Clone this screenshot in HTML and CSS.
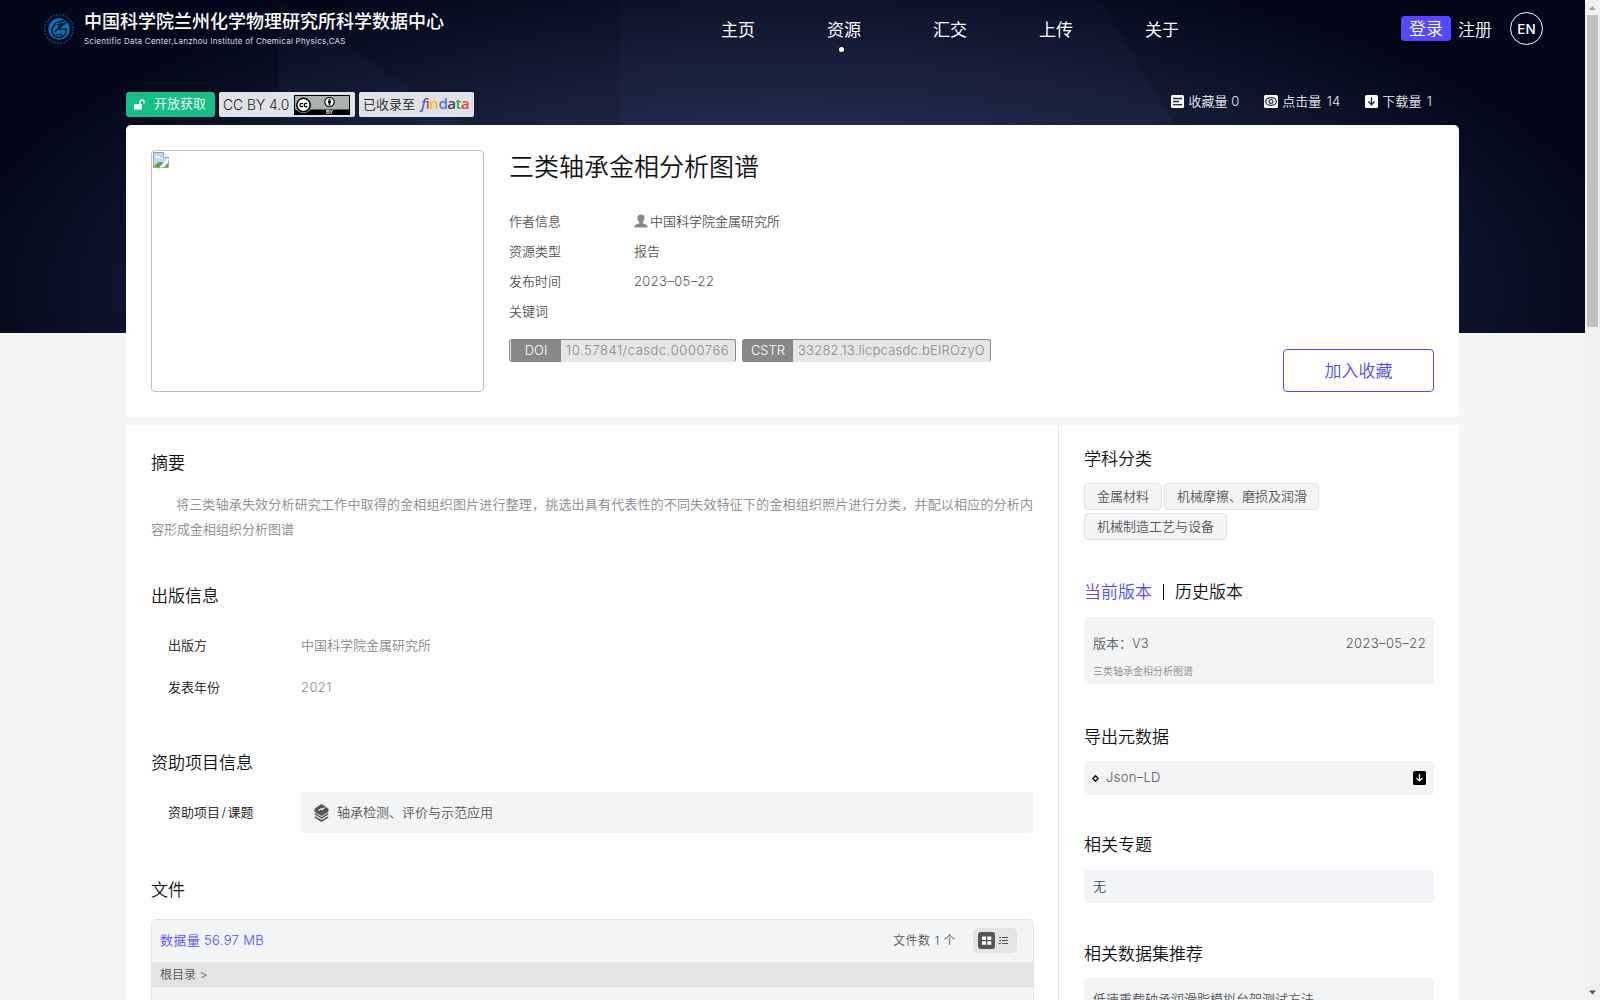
FILE: index.html
```html
<!DOCTYPE html>
<html lang="zh-CN">
<head>
<meta charset="utf-8">
<title>三类轴承金相分析图谱</title>
<link rel="stylesheet" href="styles.css">
</head>
<body>
<div class="window">
<div class="page">
  <svg class="hero-bg" viewBox="0 0 1585 333" preserveAspectRatio="none" aria-hidden="true">
    <defs>
      <radialGradient id="glow" gradientUnits="userSpaceOnUse" cx="0" cy="0" r="1" gradientTransform="translate(790 290) scale(840 340)">
        <stop offset="0" stop-color="#2e3763"/><stop offset=".45" stop-color="#202949"/><stop offset=".75" stop-color="#10172f"/><stop offset="1" stop-color="#030719"/>
      </radialGradient>
      <linearGradient id="facet" x1="0" y1="0" x2="0" y2="1"><stop offset="0" stop-color="#38456f" stop-opacity=".05"/><stop offset="1" stop-color="#38456f" stop-opacity=".25"/></linearGradient>
    </defs>
    <rect width="1585" height="333" fill="#030719"/>
    <rect width="1585" height="333" fill="url(#glow)"/>
    <path d="M279 0L620 230V333H279z" fill="url(#facet)"/>
    <path d="M620 0H1100L1300 333H620z" fill="url(#facet)"/>
  </svg>
  <header class="topbar">
    <div class="brand">
      <svg class="logo" viewBox="0 0 32 32">
        <circle cx="16" cy="16" r="14.3" fill="none" stroke="#0a3c66" stroke-width="2" stroke-dasharray="1.9 1.3"/>
        <circle cx="16" cy="16" r="10.7" fill="#0874bd"/>
        <path d="M21.500 7.500L13 9.500 9.500 14.500C7.500 20 11 24.500 16 24.500s7.500-4 7.300-8.300H15l8.500-7.500M14 12l5-1.300-7 8.300M12.500 21.500h7" fill="none" stroke="#061127" stroke-width="1.400"/>
      </svg>
      <div class="brand-text">
        <div class="brand-cn">中国科学院兰州化学物理研究所科学数据中心</div>
        <div class="brand-en">Scientific Data Center,Lanzhou Institute of Chemical Physics,CAS</div>
      </div>
    </div>
    <nav class="nav">
      <a>主页</a><a class="active">资源</a><a>汇交</a><a>上传</a><a>关于</a>
    </nav>
    <div class="account">
      <span class="login">登录</span><span class="register">注册</span><span class="lang">EN</span>
    </div>
  </header>

  <div class="container">
    <div class="meta">
      <div class="badges">
        <span class="badge open">
          <svg width="11" height="11" viewBox="0 0 11 11"><path d="M0 5.200h8V10.500H0z" fill="#fff"/><path d="M6 5.500V3a2 2 0 0 1 4 0v1.500" fill="none" stroke="#fff" stroke-width="1.300"/></svg>
          <span class="open-label">开放获取</span></span>
        <span class="badge cc"><span class="cc-label">CC BY 4.0</span>
          <svg width="56" height="20" viewBox="0 0 56 20"><rect width="56" height="20" fill="#000"/><rect x="1" y="1" width="54" height="13.500" fill="#aab2ab"/><circle cx="9.500" cy="10" r="8.300" fill="#aab2ab"/><circle cx="9.500" cy="10" r="6.700" fill="#fff" stroke="#000" stroke-width="1.500"/><path d="M9 8.800a1.700 1.700 0 1 0 0 2.400M13.200 8.800a1.700 1.700 0 1 0 0 2.400" fill="none" stroke="#000" stroke-width="1.300"/><circle cx="35.500" cy="7" r="4.700" fill="#fff" stroke="#000" stroke-width="1.100"/><circle cx="35.500" cy="4.300" r=".9"/><path d="M34 5.600h3v2.400h-.7v2.500h-1.600V8H34z"/><text x="32" y="19" class="by">BY</text></svg>
        </span>
        <span class="badge find"><span class="find-label">已收录至</span><b class="findata"><i>f</i><em class="r">i</em><em class="y">n</em><em class="b">d</em><em class="k">a</em><em class="g">t</em><em class="r">a</em></b></span>
      </div>
      <div class="stats">
        <span><svg width="13" height="13" viewBox="0 0 13 13"><rect width="13" height="13" rx="1.500" fill="#fff"/><path d="M2 3.500h9M2 6.500h6M2 9.700h9" stroke="#1d2747" stroke-width="1.300"/></svg>收藏量 0</span>
        <span class="wide"><svg width="14" height="13" viewBox="0 0 14 13"><rect width="14" height="13" rx="1.500" fill="#fff"/><ellipse cx="7" cy="6.500" rx="5.400" ry="3.900" fill="none" stroke="#273154" stroke-width="1.300"/><circle cx="7" cy="6.500" r="1.900" fill="none" stroke="#273154" stroke-width="1.200"/></svg>点击量 14</span>
        <span class="wide"><svg width="13" height="13" viewBox="0 0 13 13"><rect width="13" height="13" rx="1.500" fill="#fff"/><path d="M6.500 2.500v7M3.400 6.600l3.100 3.100 3.100-3.100" fill="none" stroke="#1d2747" stroke-width="1.400"/></svg>下载量 1</span>
      </div>
    </div>

    <section class="summary">
      <div class="cover">
        <svg width="16" height="16" viewBox="0 0 16 16"><path d="M.5.500h10l5 5v10H.5z" fill="#fff" stroke="#a0a0a0"/><path d="M1 1h9v5h5v2L8 15H1z" fill="#c5d9f7"/><path d="M3 5.500c0-1.500 2-1.700 2.500-.7 1.300-.5 2 .4 2 1.200H3z" fill="#fff"/><path d="M1 15c1-3 4-5 7-5 1 0 2 .5 2.500 1L7 15z" fill="#54a93b"/><path d="M15.500 7L7.500 15.500" stroke="#fff" stroke-width="2"/><path d="M11 15l4-4v4z" fill="#54a93b"/><path d="M10.500.500v5h5" fill="#fff" stroke="#a0a0a0"/></svg>
      </div>
      <div class="info">
        <h1>三类轴承金相分析图谱</h1>
        <dl>
          <dt>作者信息</dt><dd><svg width="14" height="14" viewBox="0 0 14 14"><path d="M7 .5c2.300 0 3.500 1.600 3.500 3.700 0 1.700-.8 3-1.700 3.700v1.300c0 .6 4.700 1.300 4.700 3.300v1H.5v-1c0-2 4.700-2.700 4.700-3.300V7.900C4.300 7.200 3.500 5.900 3.500 4.200 3.500 2.100 4.700.5 7 .5z" fill="#888"/></svg>中国科学院金属研究所</dd>
          <dt>资源类型</dt><dd>报告</dd>
          <dt>发布时间</dt><dd class="date">2023–05–22</dd>
          <dt>关键词</dt><dd></dd>
        </dl>
        <div class="ids">
          <div class="id doi"><span>DOI</span><b>10.57841/casdc.0000766</b></div>
          <div class="id cstr"><span>CSTR</span><b>33282.13.licpcasdc.bEIROzyO</b></div>
        </div>
      </div>
      <div class="collect">加入收藏</div>
    </section>

    <div class="columns">
      <main class="detail">
        <h2>摘要</h2>
        <p class="abstract">将三类轴承失效分析研究工作中取得的金相组织图片进行整理，挑选出具有代表性的不同失效特征下的金相组织照片进行分类，并配以相应的分析内容形成金相组织分析图谱</p>
        <h2 class="h-publish">出版信息</h2>
        <div class="pair"><span>出版方</span><span>中国科学院金属研究所</span></div>
        <div class="pair"><span>发表年份</span><span class="year">2021</span></div>
        <h2 class="h-fund">资助项目信息</h2>
        <div class="fund"><span>资助项目<i class="slash">/</i>课题</span>
          <div class="fund-box"><svg width="15" height="18" viewBox="0 0 15 18"><path d="M7.500 0L14.500 4.800v3L7.500 12 .5 7.800v-3z" fill="#555"/><path d="M4.500 6.500l3-2 .8 1 2.400-2" fill="none" stroke="#f3f4f6" stroke-width="1.200"/><path d="M.8 9.700l6.700 4.100 6.700-4.100M.8 12.800l6.700 4.200 6.700-4.200" fill="none" stroke="#555" stroke-width="1.500"/></svg><span class="fund-name">轴承检测、评价与示范应用</span></div>
        </div>
        <h2 class="h-file">文件</h2>
        <div class="files">
          <div class="files-head"><span class="size">数据量 56.97 MB</span><span class="count">文件数 1 个</span>
            <span class="toggle"><svg width="17" height="17" viewBox="0 0 17 17"><rect width="17" height="17" rx="3" fill="#555"/><path d="M4 4.500h4v3.500H4zM9.300 4.500h4v3.500h-4zM4 9.300h4v3.500H4zM9.300 9.300h4v3.500h-4z" fill="#fff"/></svg><svg width="9" height="9" viewBox="0 0 9 9"><path d="M0 1.500h2M3 1.500h6M0 4.500h2M3 4.500h6M0 7.500h2M3 7.500h6" stroke="#555" stroke-width="1.200"/></svg></span>
          </div>
          <div class="crumb">根目录 &gt;</div>
        </div>
      </main>
      <aside class="side">
        <h2>学科分类</h2>
        <div class="tags"><span>金属材料</span><span>机械摩擦、磨损及润滑</span><span>机械制造工艺与设备</span></div>
        <h2 class="tabs"><span class="on">当前版本</span><i></i><span>历史版本</span></h2>
        <div class="box version"><div class="version-row"><span>版本：V3</span><span class="date">2023–05–22</span></div><div class="version-name">三类轴承金相分析图谱</div></div>
        <h2 class="h-export">导出元数据</h2>
        <div class="box export"><svg width="7" height="7" viewBox="0 0 7 7"><path d="M3.500.8l2.700 2.700-2.700 2.700L.8 3.500z" fill="#fff" stroke="#000" stroke-width="1.300"/></svg><span class="json">Json–LD</span><svg class="dl" width="13" height="14" viewBox="0 0 13 14"><rect width="13" height="14" rx="1.500"/><path d="M6.500 3v7M3.500 7l3 3 3-3" fill="none" stroke="#fff" stroke-width="1.200"/></svg></div>
        <h2 class="h-topic">相关专题</h2>
        <div class="box topic">无</div>
        <h2 class="h-rec">相关数据集推荐</h2>
        <div class="box rec">低速重载轴承润滑脂模拟台架测试方法</div>
      </aside>
    </div>
  </div>
</div>
<div class="scrollbar"><svg width="15" height="15" viewBox="0 0 15 15"><path d="M4 10l3.500-4 3.500 4z" fill="#a3a3a3"/></svg><div class="thumb"></div><svg class="down" width="15" height="15" viewBox="0 0 15 15"><path d="M4 5.500h7L7.500 9.500z" fill="#505050"/></svg></div>
</div>
</body>
</html>
```
FILE: styles.css
```css
* { box-sizing: border-box; }
body { margin: 0; font-family: Inter, "Noto Sans CJK SC", sans-serif; font-weight: 350; font-size: 13px; color: #555; }
svg { display: block; flex: none; }
.window { display: flex; height: 1000px; overflow: hidden; }
.page { position: relative; width: 1585px; height: 1000px; overflow: hidden; background: #f5f5f5; }
.hero-bg { position: absolute; left: 0; top: 0; width: 1585px; height: 333px; }
.topbar { position: relative; display: flex; height: 57px; color: #fff; }
.brand { display: flex; width: 721px; padding: 13px 0 0 43px; gap: 9px; }
.logo { width: 32px; height: 32px; }
.brand-text { margin-top: -4px; }
.brand-cn { font-size: 18px; font-weight: 500; line-height: 26px; white-space: nowrap; }
.brand-en { font-size: 8px; font-weight: 400; line-height: 12px; letter-spacing: .24px; color: #dcdfe8; white-space: nowrap; }
.nav { display: flex; width: 680px; gap: 72px; padding-top: 17px; font-size: 17px; font-weight: 400; line-height: 26px; }
.nav a { width: 34px; white-space: nowrap; }
.nav .active::after { content: ""; display: block; width: 5px; height: 5px; margin: 4px 0 0 12px; border-radius: 50%; background: #fff; }
.account { display: flex; align-items: flex-start; font-size: 17px; line-height: 26px; }
.login { width: 50px; height: 25px; margin-top: 16px; border-radius: 4px; background: #5549ff; text-align: center; }
.register { margin: 17px 18px 0 7px; }
.lang { width: 33px; height: 33px; margin-top: 12px; border: 1px solid #fff; border-radius: 50%; font-size: 13.5px; font-weight: 500; line-height: 33px; text-align: center; }

.container { position: relative; width: 1333px; margin-left: 126px; }
.meta { display: flex; justify-content: space-between; height: 68px; padding-top: 35px; }
.badges { display: flex; gap: 4px; height: 25px; }
.badge { display: flex; align-items: center; height: 25px; border-radius: 2px; background: #e1e2e8; color: #222; white-space: nowrap; }
.open { width: 89px; padding-left: 8px; gap: 9px; background: #18bd88; color: #fff; border-radius: 3px; }
.open-label { height: 25px; line-height: 23px; }
.cc { width: 136px; padding-left: 4px; gap: 5px; }
.cc-label { width: 66px; font-size: 13.8px; }
.by { font: 700 5px "Liberation Sans", sans-serif; fill: #fff; }
.find { width: 115px; padding-left: 4px; gap: 6px; }
.find-label { height: 25px; line-height: 24px; }
.findata { height: 25px; font: 600 15px "Open Sans", sans-serif; line-height: 22px; letter-spacing: -.5px; color: #4d62e8; }
.findata em { font-style: normal; }
.findata .r { color: #ea4335; } .findata .y { color: #fbbc05; } .findata .b { color: #4a78ee; } .findata .k { color: #454a55; } .findata .g { color: #34a853; }
.stats { display: flex; gap: 25px; padding-right: 27px; line-height: 18px; color: #eceef4; }
.stats span { display: flex; align-items: center; height: 18px; gap: 4px; white-space: nowrap; }
.stats .wide { letter-spacing: .1px; word-spacing: 1.5px; }

.summary { display: flex; align-items: flex-start; height: 292px; padding: 25px; border-radius: 5px; background: #fff; }
.cover { width: 333px; height: 242px; padding: 1px; border: 1px solid silver; border-radius: 4px; }
.info { width: 799px; padding-left: 25px; }
h1 { margin: 0 0 22px; font-size: 25px; line-height: 34px; font-weight: 350; color: #111; }
dl { display: grid; grid-template-columns: 125px 1fr; grid-auto-rows: 30px; margin: 0; line-height: 30px; }
dd { display: flex; align-items: center; height: 30px; margin: 0; gap: 2px; }
.date { letter-spacing: .37px; }
.ids { display: flex; gap: 6px; margin-top: 13px; }
.id { display: flex; height: 23px; border: 1px solid #888; border-bottom: 0; border-radius: 3px; background: #e6e6e6; line-height: 21px; color: #888; white-space: nowrap; }
.id span { width: 50px; background: #888; color: #fff; text-align: center; }
.id b { font-weight: 300; padding-left: 5px; }
.doi { width: 227px; padding-left: 1px; }
.doi b { letter-spacing: .56px; }
.cstr { width: 249px; }
.cstr b { letter-spacing: .22px; }
.collect { width: 151px; height: 43px; margin-top: 199px; border: 1px solid #5549ff; border-radius: 4px; font-size: 17px; line-height: 42px; color: #5549ff; text-align: center; }

.columns { display: flex; height: 700px; margin-top: 8px; background: #fff; }
h2 { margin: 0; height: 24px; font-size: 17px; line-height: 26px; font-weight: 350; color: #111; }
.detail { width: 932px; padding: 25px 25px 0 25px; }
.abstract { margin: 18px 0 0; line-height: 25px; text-indent: 25px; text-align: justify; color: #888; }
.h-publish { margin: 41px 0 17px; }
.pair { display: flex; height: 42px; padding-left: 17px; line-height: 42px; color: #888; }
.pair span:first-child, .fund > span { width: 133px; color: #111; }
.year { letter-spacing: .4px; }
.slash { font-style: normal; padding: 0 1.5px; }
.h-fund { margin: 42px 0 18px; }
.fund { display: flex; height: 41px; padding-left: 17px; line-height: 40px; }
.fund-box { display: flex; flex: 1; align-items: center; gap: 8px; padding-left: 13px; border-radius: 4px; background: #f3f4f6; }
.fund-name { height: 41px; }
.h-file { margin: 44px 0 18px; }
.files { width: 883px; height: 200px; border: 1px solid #e3e3e3; border-radius: 5px; background: #f3f4f6; }
.files-head { display: flex; align-items: center; height: 42px; padding: 0 16px 0 8px; }
.size { flex: 1; height: 42px; line-height: 41px; color: #5549ff; letter-spacing: .33px; }
.count { height: 42px; font-size: 12px; line-height: 41px; letter-spacing: .5px; margin-right: 17px; }
.toggle { display: flex; align-items: center; width: 44px; height: 25px; margin-bottom: 2px; padding-left: 5px; gap: 4px; border-radius: 5px; background: #e4e4e4; }
.crumb { height: 25px; padding-left: 8px; background: #e3e3e3; font-size: 12px; line-height: 25px; }

.side { width: 401px; padding: 21px 25px 0; border-left: 1px solid #e3e3e3; }
.tags { display: flex; flex-wrap: wrap; gap: 3px 2px; margin-top: 13px; }
.tags span { height: 27px; padding: 0 12px; border: 1px solid #e3e3e3; border-radius: 4px; background: #f3f4f6; line-height: 24px; }
.tags span:nth-child(2) { padding-right: 11px; }
.tabs { display: flex; align-items: center; margin: 40px 0 13px; }
.tabs i { width: 1px; height: 16px; margin: 0 11px; background: #111; }
.tabs .on { color: #5549ff; }
.box { border-radius: 4px; background: #f3f4f6; padding: 0 8px 0 9px; }
.version { height: 67px; padding-top: 16px; }
.version-row { display: flex; justify-content: space-between; line-height: 20px; }
.version-name { margin-top: 10px; font-size: 10px; line-height: 16px; color: #888; }
.h-export { margin: 40px 0 13px; }
.export { display: flex; align-items: center; height: 34px; gap: 7px; }
.export svg:first-child { margin-left: -1px; }
.json { height: 34px; line-height: 33px; letter-spacing: .3px; }
.dl { margin-left: auto; }
.h-topic { margin: 37px 0 14px; }
.topic { height: 33px; line-height: 32px; background: #f2f4f7; color: #34495e; }
.h-rec { margin: 38px 0 13px; }
.rec { height: 60px; line-height: 42px; }

.scrollbar { display: flex; flex-direction: column; width: 15px; background: #f1f1f1; }
.thumb { width: 11px; height: 312px; margin-left: 2px; background: #c1c1c1; }
.down { margin-top: auto; }
```
